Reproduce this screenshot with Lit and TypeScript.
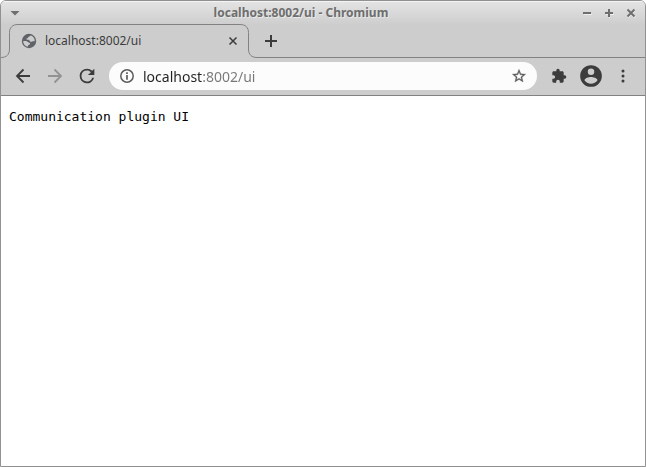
import { LitElement, html, css } from "lit";
import { customElement, state } from "lit/decorators.js";

@customElement("app-root")
export class AppRoot extends LitElement {
  static styles = css`
    :host {
      display: flex;
      flex-direction: column;
      box-sizing: border-box;
      min-height: 100vh;
      border: 1px solid #919191;
      border-radius: 6px 6px 0 0;
      overflow: hidden;
      background: #fff;
      font-family: "Noto Sans", "Open Sans", sans-serif;
      color: #3c3c3c;
    }
    * {
      box-sizing: border-box;
    }
    button {
      display: flex;
      align-items: center;
      justify-content: center;
      flex: none;
      padding: 0;
      border: 0;
      background: none;
      color: inherit;
    }
    svg {
      display: block;
      flex: none;
    }
    .titlebar {
      display: flex;
      align-items: center;
      height: 23px;
      padding: 1px 3px 0;
      background: linear-gradient(#e4e4e4, #cecece);
      box-shadow: inset 0 1px #f4f4f4;
      color: #6e6e6e;
    }
    .title {
      flex: 1;
      text-align: center;
      font-size: 12px;
      line-height: 16px;
      font-weight: 700;
      margin: 0;
      text-shadow: 1px 1px #e8e8e8;
    }
    .win {
      width: 22px;
      height: 22px;
    }
    .tabs {
      display: flex;
      height: 34px;
      background: #cdcdcd;
    }
    .edge {
      fill: none;
      stroke: #828282;
    }
    .tab {
      display: flex;
      align-items: center;
      width: 222px;
      border-top: 1px solid #828282;
      padding: 0 0 1px 3px;
    }
    .tab-title {
      flex: 1;
      padding-left: 8px;
      font-size: 12px;
      line-height: 16px;
    }
    .tab-close {
      width: 14px;
      height: 16px;
    }
    .strip {
      display: flex;
      align-items: center;
      flex: 1;
      border-bottom: 1px solid #828282;
    }
    .new-tab {
      width: 28px;
      height: 28px;
    }
    .toolbar {
      display: flex;
      align-items: center;
      height: 38px;
      padding: 0 6px 1px;
      border-bottom: 1px solid #828282;
      background: #cdcdcd;
    }
    .tool {
      width: 32px;
      height: 32px;
    }
    .off {
      color: #929292;
    }
    .address {
      display: flex;
      align-items: center;
      flex: 1;
      height: 28px;
      margin: 0 6px;
      padding: 0 10px;
      border-radius: 14px;
      background: #fcfcfc;
      color: #5c5c5c;
    }
    .url {
      flex: 1;
      min-width: 0;
      height: 28px;
      margin: 0 8px;
      padding: 0;
      border: 0;
      outline: 0;
      font: 14px/20px "Noto Sans", "Open Sans", sans-serif;
      color: transparent;
      caret-color: #222;
      background: linear-gradient(90deg, #222 60px, #777 60px);
      -webkit-background-clip: text;
      background-clip: text;
    }
    .page {
      flex: 1;
      padding: 0 8px;
    }
    .page pre {
      margin: 13px 0;
      font: 13px/15px "DejaVu Sans Mono", monospace;
      color: #000;
    }
  `;

  @state() private address = "localhost:8002/ui";

  render() {
    return html`
      <header class="titlebar">
        <button class="win" aria-label="Window menu">
          <svg width="10" height="6" viewBox="0 0 10 6"><path d="M0 1h9L4.500 5.500z" fill="currentColor" transform="translate(.5 0)" /></svg>
        </button>
        <h1 class="title">${this.address} - Chromium</h1>
        <button class="win" aria-label="Minimize">
          <svg width="10" height="10"><path d="M2 6.500h8" stroke="#eee" /><path d="M1 5h8" stroke="currentColor" stroke-width="2" /></svg>
        </button>
        <button class="win" aria-label="Maximize">
          <svg width="10" height="10"><path d="M2 6.500h8M5.500 2v8" stroke="#eee" /><path d="M1 5h8M5 1v8" stroke="currentColor" stroke-width="2" /></svg>
        </button>
        <button class="win" aria-label="Close window">
          <svg width="10" height="10"><path d="m2 2 7 7.500M9 2 2 9.500" stroke="#eee" stroke-width="2" /><path d="m1.500 1.500 7 7m0-7-7 7" stroke="currentColor" stroke-width="2" /></svg>
        </button>
      </header>
      <nav class="tabs" aria-label="Tabs">
        <svg class="edge" width="17" height="34"><path d="M0 33.500C5.500 33.500 8.500 30.500 8.500 25V8.500C8.500 3.500 11.500.5 17 .5" /></svg>
        <div class="tab">
          <svg width="16" height="16" viewBox="0 0 16 16">
            <circle cx="8" cy="8" r="7.200" fill="#5f6368" />
            <path d="M9.600 2.500C9 3.900 7.200 3.400 7.100 4.600 7 5.600 5.500 5.100 5.400 6.100 5.300 7 6.500 6.800 7.500 6.800 8.900 6.900 8.300 8.700 9.700 8.800 11 8.900 11.400 8 13.600 8.300 14.100 5.600 12.300 3.200 9.600 2.500zM2.200 8C3.800 7.900 5.900 7.600 6.600 8.800 7.200 9.900 9.200 9.500 9.200 10.800 9.200 11.700 7.500 11.600 7.100 12.400L6.600 13.700C4 13.100 2.100 10.800 2.200 8z" fill="#cdcdcd" />
          </svg>
          <span class="tab-title">${this.address}</span>
          <button class="tab-close" aria-label="Close tab">
            <svg width="10" height="10"><path d="m1.500 1.500 7 7m0-7-7 7" stroke="currentColor" stroke-width="1.500" /></svg>
          </button>
        </div>
        <svg class="edge" width="17" height="34"><path d="M0 .5C5.500.5 8.500 3.500 8.500 8.500V25C8.500 30.500 11.500 33.500 17 33.500" /></svg>
        <div class="strip">
          <button class="new-tab" aria-label="New tab">
            <svg width="12" height="12"><path d="M0 6h12M6 0v12" stroke="currentColor" stroke-width="2" /></svg>
          </button>
        </div>
      </nav>
      <div class="toolbar">
        <button class="tool" aria-label="Back">
          <svg width="20" height="20" viewBox="0 0 20 20"><path d="M17 10H4M10.500 3.500 4 10l6.500 6.500" fill="none" stroke="currentColor" stroke-width="1.800" /></svg>
        </button>
        <button class="tool off" aria-label="Forward" disabled>
          <svg width="20" height="20" viewBox="0 0 20 20"><path d="M3 10h13M9.500 3.500 16 10l-6.500 6.500" fill="none" stroke="currentColor" stroke-width="1.800" /></svg>
        </button>
        <button class="tool" aria-label="Reload">
          <svg width="22" height="22" viewBox="0 0 24 24"><path d="M17.650 6.350A7.960 7.960 0 0 0 12 4a8 8 0 1 0 7.730 10h-2.080A6 6 0 1 1 12 6c1.660 0 3.140.69 4.220 1.780L13 11h7V4z" fill="currentColor" /></svg>
        </button>
        <div class="address">
          <svg width="16" height="16" viewBox="0 0 16 16"><circle cx="8" cy="8" r="6.200" fill="none" stroke="currentColor" stroke-width="1.500" /><path d="M8 4.200v1.700M8 7v4.700" stroke="currentColor" stroke-width="1.700" /></svg>
          <input class="url" aria-label="Address" spellcheck="false" .value=${this.address} />
          <svg width="16" height="16" viewBox="0 0 24 24" role="img" aria-label="Bookmark"><path d="m22 9.240-7.190-.62L12 2 9.190 8.630 2 9.240l5.460 4.730L5.820 21 12 17.270 18.180 21l-1.630-7.030zM12 15.400l-3.760 2.270 1-4.280-3.320-2.880 4.380-.38L12 6.100l1.710 4.040 4.380.38-3.320 2.880 1 4.280z" fill="currentColor" stroke="currentColor" stroke-width=".5" /></svg>
        </div>
        <button class="tool" aria-label="Extensions">
          <svg width="16" height="16" viewBox="0 0 24 24"><path d="M20.500 11H19V7c0-1.100-.9-2-2-2h-4V3.500a2.500 2.500 0 0 0-5 0V5H4c-1.100 0-2 .9-2 2v3.800h1.500a2.700 2.700 0 0 1 0 5.400H2V20c0 1.100.9 2 2 2h3.800v-1.500a2.700 2.700 0 0 1 5.400 0V22H17c1.100 0 2-.9 2-2v-4h1.500a2.500 2.500 0 0 0 0-5z" fill="currentColor" /></svg>
        </button>
        <button class="tool" aria-label="Profile">
          <svg width="26" height="26" viewBox="0 0 24 24"><path d="M12 2a10 10 0 1 0 0 20 10 10 0 0 0 0-20zm0 3a3 3 0 1 1 0 6 3 3 0 0 1 0-6zm0 14.200a7.200 7.200 0 0 1-6-3.220c.03-1.990 4-3.080 6-3.080 1.990 0 5.970 1.090 6 3.080a7.200 7.200 0 0 1-6 3.220z" fill="currentColor" /></svg>
        </button>
        <button class="tool" aria-label="Menu">
          <svg width="4" height="14" fill="currentColor"><circle cx="2" cy="2" r="1.500" /><circle cx="2" cy="7" r="1.500" /><circle cx="2" cy="12" r="1.500" /></svg>
        </button>
      </div>
      <main class="page"><pre>Communication plugin UI</pre></main>
    `;
  }
}
